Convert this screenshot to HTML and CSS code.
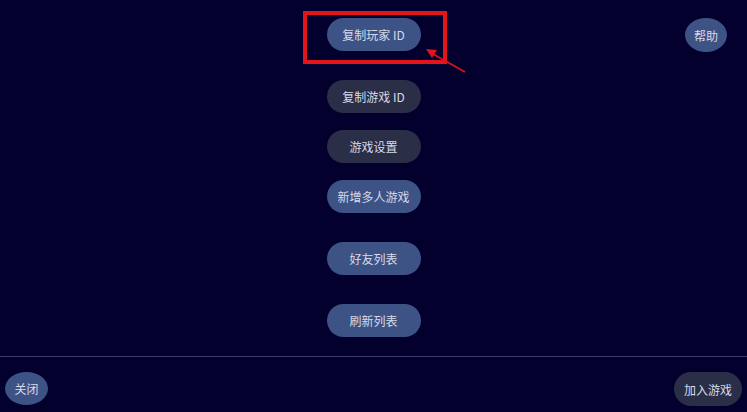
FILE: index.html
```html
<!DOCTYPE html>
<html lang="zh-CN">
<head>
<meta charset="utf-8">
<title>游戏菜单</title>
<link rel="stylesheet" href="styles.css">
</head>
<body>
<div class="screen">
  <div class="main">
    <div class="side"></div>
    <div class="menu">
      <button class="btn blue first">复制玩家 ID</button>
      <button class="btn dark gap-l">复制游戏 ID</button>
      <button class="btn dark gap-s">游戏设置</button>
      <button class="btn blue gap-s">新增多人游戏</button>
      <button class="btn blue gap-l">好友列表</button>
      <button class="btn blue gap-l">刷新列表</button>
    </div>
    <div class="side right">
      <button class="btn blue round">帮助</button>
    </div>
    <div class="highlight"></div>
    <svg class="arrow" width="60" height="40" viewBox="0 0 60 40">
      <line x1="53" y1="36" x2="21" y2="18" stroke="#d8141c" stroke-width="1.6"/>
      <polygon points="14,13 25,14 20,22" fill="#e3141b"/>
    </svg>
  </div>
  <div class="divider"></div>
  <div class="bottom">
    <button class="btn blue round close">关闭</button>
    <button class="btn dark join">加入游戏</button>
  </div>
</div>
</body>
</html>
```
FILE: styles.css
```css
html, body {
  margin: 0;
  padding: 0;
  background: #03002e;
}
.screen {
  width: 747px;
  height: 412px;
  display: flex;
  flex-direction: column;
  font-family: "Noto Sans CJK SC", "Noto Sans", sans-serif;
  overflow: hidden;
}
.main {
  position: relative;
  height: 356px;
  display: grid;
  grid-template-columns: 1fr auto 1fr;
}
.menu {
  display: flex;
  flex-direction: column;
  align-items: center;
  padding-top: 18px;
}
.side.right {
  display: flex;
  justify-content: flex-end;
  align-items: flex-start;
  padding-top: 18px;
  padding-right: 20px;
}
.btn {
  border: none;
  margin: 0;
  padding: 0;
  font-family: inherit;
  font-size: 12px;
  color: #d7dbe8;
  width: 94px;
  height: 33px;
  border-radius: 17px;
  display: flex;
  align-items: center;
  justify-content: center;
  white-space: nowrap;
}
.blue { background: #3d5285; }
.dark { background: #2a2e47; }
.gap-l { margin-top: 29px; }
.gap-s { margin-top: 17px; }
.round {
  width: 42px;
  height: 34px;
  border-radius: 50%;
}
.highlight {
  position: absolute;
  left: 303px;
  top: 11px;
  width: 136px;
  height: 45px;
  border: 4px solid #e3141b;
}
.arrow {
  position: absolute;
  left: 412px;
  top: 36px;
}
.divider {
  height: 1px;
  background: #3c3c6c;
}
.bottom {
  flex: 1;
  display: flex;
  justify-content: space-between;
  align-items: flex-start;
  padding: 15px 5px 0 5px;
}
.close {
  width: 43px;
  height: 33px;
}
.join {
  width: 68px;
  height: 34px;
  border-radius: 17px;
}
```
